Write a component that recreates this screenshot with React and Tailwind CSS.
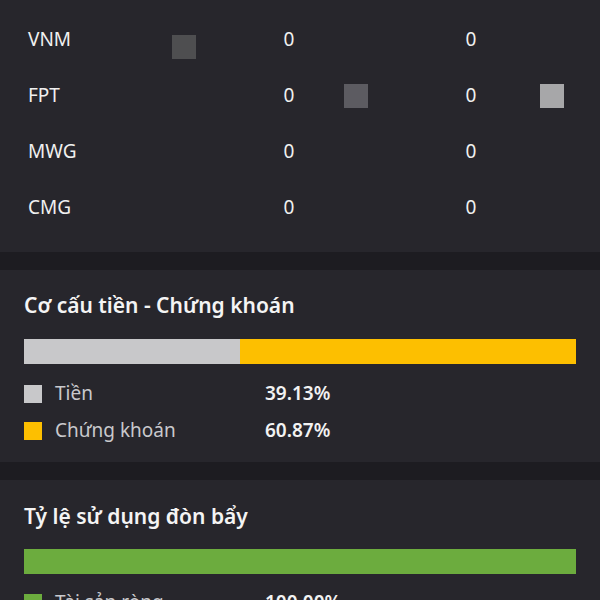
import React from 'react'

const rows = ['VNM', 'FPT', 'MWG', 'CMG']

const Legend = ({ color, label, value }) => (
  <div className="flex items-center h-[37px]">
    <span className={`w-[18px] h-[18px] ${color}`} />
    <span className="ml-[13px] w-[210px] text-[19px] text-[#c9c9cc]">{label}</span>
    <span className="text-[19px] font-semibold text-[#f2f2f2]">{value}</span>
  </div>
)

export default function App() {
  return (
    <div className="w-[600px] h-[600px] overflow-hidden bg-[#1d1c21] font-['Noto_Sans',sans-serif]">
      {/* bang ma co phieu */}
      <div className="relative bg-[#27262c] pt-[11px] pb-[17px]">
        {rows.map((t) => (
          <div key={t} className="grid grid-cols-[230px_118px_64px_118px_1fr] items-center h-14 text-[19px] text-[#f0f0f0]">
            <span className="pl-7">{t}</span>
            <span className="text-center">0</span>
            <span />
            <span className="text-center">0</span>
            <span />
          </div>
        ))}
        <span className="absolute left-[172px] top-[35px] w-6 h-6 bg-[#4e4e50]" />
        <span className="absolute left-[344px] top-[84px] w-6 h-6 bg-[#5c5b61]" />
        <span className="absolute left-[540px] top-[84px] w-6 h-6 bg-[#a7a7a9]" />
      </div>

      <div className="mt-[18px] bg-[#27262c] px-6 pt-[21px] pb-[13px]">
        <div className="text-[21px] leading-7 font-semibold text-[#f4f4f4]">Cơ cấu tiền - Chứng khoán</div>
        <div className="mt-5 flex h-[25px]">
          <div className="w-[39.13%] bg-[#c8c8ca]" />
          <div className="flex-1 bg-[#fdbf00]" />
        </div>
        <div className="mt-[11px]">
          <Legend color="bg-[#c8c8ca]" label="Tiền" value="39.13%" />
          <Legend color="bg-[#fdbf00]" label="Chứng khoán" value="60.87%" />
        </div>
      </div>

      <div className="mt-[18px] bg-[#27262c] px-6 pt-[22px] pb-4">
        <div className="text-[21px] leading-7 font-semibold text-[#f4f4f4]">Tỷ lệ sử dụng đòn bẩy</div>
        <div className="mt-[19px] h-[25px] bg-[#6cac3e]" />
        <div className="mt-[10px]">
          <Legend color="bg-[#6cac3e]" label="Tài sản ròng" value="100.00%" />
        </div>
      </div>
    </div>
  )
}
